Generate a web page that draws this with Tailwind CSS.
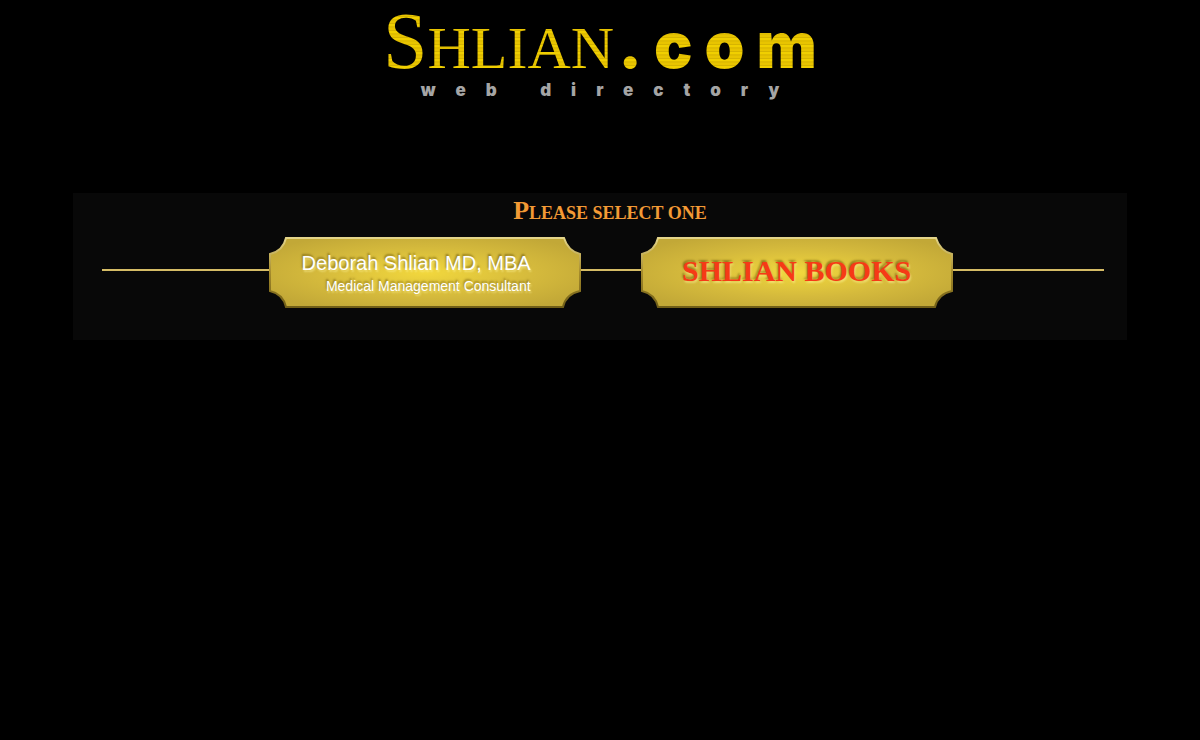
<!DOCTYPE html>
<html lang="en">
<head>
  <meta charset="UTF-8">
  <meta name="viewport" content="width=device-width, initial-scale=1.0">
  <title>Shlian.com Web Directory</title>
  <script src="https://cdn.jsdelivr.net/npm/@tailwindcss/browser@4"></script>
  <style>
    .gold { background: repeating-linear-gradient(#e8c400 0 2px, #d6b400 2px 3px, #f0cf00 3px 5px, #e0bd00 5px 7px); -webkit-background-clip: text; background-clip: text; color: transparent; }
    .engraved { text-shadow: -1px -2px 2px rgba(105, 85, 10, 0.6), 1px 2px 2px rgba(255, 245, 160, 0.5); }
  </style>
</head>
<body class="min-h-screen bg-black font-['Liberation_Sans',sans-serif]">
  <!-- Header -->
  <header class="flex h-[193px] flex-col items-center">
    <h1 class="gold flex h-20 items-baseline pl-3 leading-[82px]">
      <span class="font-['Liberation_Serif',serif] text-[80px]">S</span>
      <span class="font-['Liberation_Serif',serif] text-[60px]">HLIAN</span>
      <span class="pl-1 font-['Inter',sans-serif] text-[64px] font-black tracking-[12px]">.com</span>
    </h1>
    <p class="pl-5 font-['Inter',sans-serif] text-[17px] leading-5 font-black tracking-[20px] text-[#a5a5a5]">web directory</p>
  </header>

  <!-- Directory -->
  <main class="mx-[73px] h-[147px] bg-[#080808]">
    <h2 class="h-11 pl-5 text-center font-['Liberation_Serif',serif] text-[18px] leading-9 font-bold text-[#f39a35]"><span class="text-[26px]">P</span>LEASE SELECT ONE</h2>
    <nav class="flex items-start pr-[23px] pl-[29px]">
      <div class="mt-8 h-[2px] grow-[11] bg-[#d5bc66]"></div>
      <a href="#" class="relative block h-[71px] w-[312px] pr-[50px] text-right whitespace-nowrap text-white">
        <svg class="absolute inset-0" width="312" height="71" viewBox="0 0 312 71" aria-hidden="true">
          <defs>
            <radialGradient id="plate" r=".6"><stop offset="0" stop-color="#f2d83d"/><stop offset=".6" stop-color="#d4b93c"/><stop offset="1" stop-color="#c2a837"/></radialGradient>
            <linearGradient id="rim" x2="0" y2="1"><stop offset="0" stop-color="#e4d58a"/><stop offset=".5" stop-color="#a58b2c"/><stop offset="1" stop-color="#705e17"/></linearGradient>
          </defs>
          <path d="M17 1H295Q299 14 311 17V54Q297 57 294 70H17Q14 57 1 54V17Q14 14 17 1Z" fill="url(#plate)" stroke="url(#rim)" stroke-width="2"/>
        </svg>
        <span class="engraved relative block pt-3 text-[20px] leading-7">Deborah Shlian MD, MBA</span>
        <span class="engraved relative block text-[14px] leading-[18px]">Medical Management Consultant</span>
      </a>
      <div class="mt-8 h-[2px] w-[60px] bg-[#d5bc66]"></div>
      <a href="#" class="relative flex h-[71px] w-[312px] items-center justify-center pb-1 font-['Liberation_Serif',serif] text-[30px] font-bold text-[#f63a16]">
        <svg class="absolute inset-0" width="312" height="71" viewBox="0 0 312 71" aria-hidden="true">
          <path d="M17 1H295Q299 14 311 17V54Q297 57 294 70H17Q14 57 1 54V17Q14 14 17 1Z" fill="url(#plate)" stroke="url(#rim)" stroke-width="2"/>
        </svg>
        <span class="engraved relative">SHLIAN BOOKS</span>
      </a>
      <div class="mt-8 h-[2px] grow-[10] bg-[#d5bc66]"></div>
    </nav>
  </main>
</body>
</html>
